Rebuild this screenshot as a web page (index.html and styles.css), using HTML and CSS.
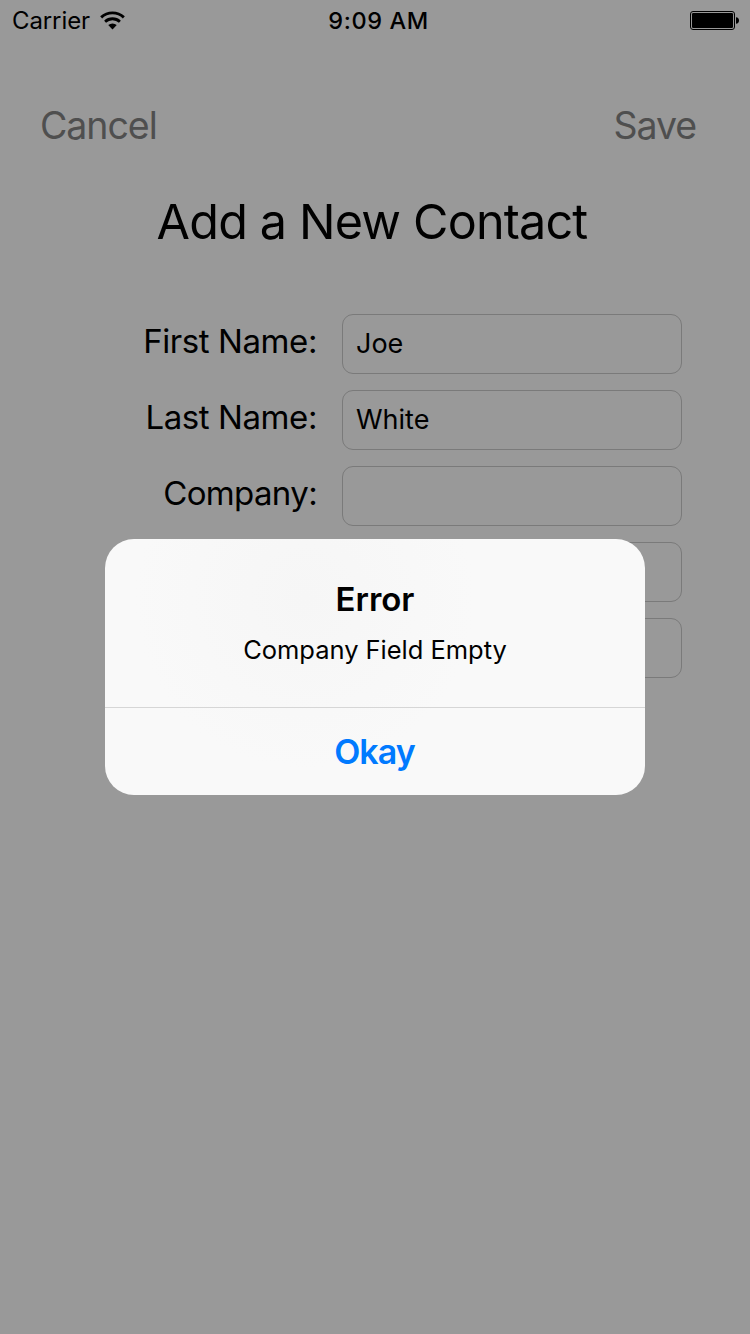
FILE: index.html
```html
<!DOCTYPE html>
<html lang="en">
<head>
<meta charset="utf-8">
<title>Add a New Contact</title>
<link rel="stylesheet" href="styles.css">
</head>
<body>
<div class="screen">
  <header class="status">
    <div class="status-left">
      <span class="carrier">Carrier</span>
      <svg class="wifi" width="25" height="20" viewBox="0 0 26 20">
        <path d="M1.2 6.2A17.3 17.3 0 0 1 24.8 6.2" fill="none" stroke="#000" stroke-width="3"/>
        <path d="M5.3 10.7A11.3 11.3 0 0 1 20.7 10.7" fill="none" stroke="#000" stroke-width="2.9"/>
        <path d="M8.6 14.2A6.7 6.7 0 0 1 17.4 14.2L13 18.8Z" fill="#000"/>
      </svg>
    </div>
    <span class="time">9:09 AM</span>
    <div class="status-right">
      <svg width="50" height="20" viewBox="0 0 50 20">
        <rect x=".5" y=".5" width="44" height="18" rx="2.5" fill="none" stroke="#000"/>
        <rect x="2" y="2" width="41" height="15" rx="1.2" fill="#000"/>
        <path d="M46 6.2C48 6.2 49 7.6 49 9.5S48 12.8 46 12.8Z" fill="#000"/>
      </svg>
    </div>
  </header>
  <nav class="nav">
    <span class="cancel">Cancel</span>
    <span class="save">Save</span>
  </nav>
  <h1 class="title">Add a New Contact</h1>
  <form class="form">
    <div class="row"><label class="label">First Name:</label><div class="field">Joe</div></div>
    <div class="row"><label class="label">Last Name:</label><div class="field">White</div></div>
    <div class="row"><label class="label company">Company:</label><div class="field"></div></div>
    <div class="row"><label class="label"></label><div class="field"></div></div>
    <div class="row"><label class="label"></label><div class="field"></div></div>
  </form>
  <section class="alert">
    <div class="alert-body">
      <h2 class="alert-title">Error</h2>
      <p class="alert-message">Company Field Empty</p>
    </div>
    <div class="alert-action">Okay</div>
  </section>
</div>
</body>
</html>
```
FILE: styles.css
```css
* { box-sizing: border-box; }
body { margin: 0; font-family: Inter, "Liberation Sans", sans-serif; color: #000; }
.screen { position: relative; width: 750px; height: 1334px; overflow: hidden; background: #999; }
.status { display: grid; grid-template-columns: 1fr auto 1fr; align-items: center; height: 41px; padding: 0 10px 0 12px; font-size: 24px; line-height: 41px; }
.status-left { display: flex; align-items: center; gap: 10px; }
.status-right { display: flex; justify-content: flex-end; }
.carrier { letter-spacing: -0.1px; }
.time { padding-left: 5px; font-weight: 540; font-size: 23.5px; letter-spacing: 0.6px; }
.nav { display: flex; justify-content: space-between; margin-top: 60px; padding: 0 54px 0 40px; font-size: 37.5px; line-height: 50px; color: #4f4f4f; }
.cancel, .save { letter-spacing: -1.05px; }
.title { margin: 41px 0 0; padding-right: 6px; font-size: 48.5px; line-height: 60px; font-weight: 400; text-align: center; letter-spacing: -0.82px; }
.form { display: flex; flex-direction: column; gap: 16px; margin-top: 62px; }
.row { display: flex; height: 60px; gap: 25px; }
.label { width: 317px; font-size: 33px; line-height: 55px; text-align: right; letter-spacing: -0.42px; }
.company { letter-spacing: -0.65px; }
.field { width: 340px; height: 60px; padding: 0 13px; border: 1px solid #7a7a7a; border-radius: 11px; font-size: 27px; line-height: 57px; }
.alert { position: absolute; left: 105px; top: 539px; width: 540px; height: 256px; overflow: hidden; border-radius: 29px; background: radial-gradient(circle at 200px 60px, #f6f6f6 0, #f9f9f9 170px); text-align: center; }
.alert-body { height: 169px; padding-top: 40px; border-bottom: 1px solid #d6d6d6; }
.alert-title { margin: 0; font-size: 33px; line-height: 40px; font-weight: 600; }
.alert-message { margin: 11px 0 0; font-size: 25.5px; line-height: 40px; letter-spacing: -0.03px; }
.alert-action { padding-right: 1px; font-size: 34px; line-height: 88px; font-weight: 600; letter-spacing: -0.95px; color: #007aff; }
```
